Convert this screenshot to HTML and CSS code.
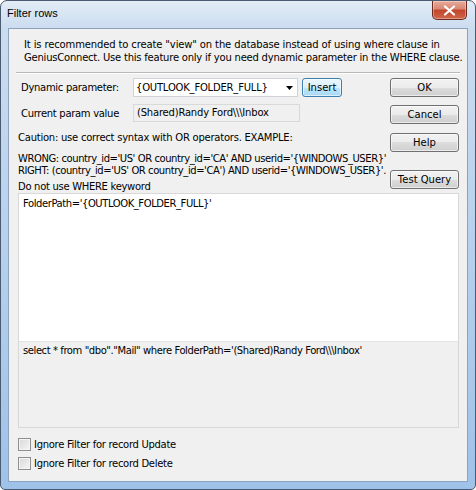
FILE: index.html
```html
<!DOCTYPE html>
<html lang="en">

<head>
    <meta charset="UTF-8">
    <meta name="viewport" content="width=device-width, initial-scale=1.0">
    <title>Filter rows</title>
    <link rel="stylesheet" href="styles.css">
</head>

<body>
    <div class="window">
        <div class="titlebar">
            <span class="title">Filter rows</span>
            <span class="close-btn">
                <svg width="13" height="11" viewBox="0 0 13 11">
                    <path d="M2 1.5 L11 9.5 M11 1.5 L2 9.5" stroke="#fff" stroke-width="2.2" stroke-linecap="round" />
                </svg>
            </span>
        </div>
        <div class="client">
            <p class="intro">
                <span class="intro-line1">It is recommended to create "view" on the database instead of using where clause in</span><br>
                <span class="intro-line2">GeniusConnect. Use this feature only if you need dynamic parameter in the WHERE clause.</span>
            </p>
            <div class="separator"></div>
            <div class="top">
                <div class="form">
                    <div class="row row-param">
                        <span class="label">Dynamic parameter:</span>
                        <div class="combo">
                            <span class="combo-text">{OUTLOOK_FOLDER_FULL}</span>
                            <svg class="combo-arrow" width="7" height="4" viewBox="0 0 7 4">
                                <path d="M0 0 H7 L3.5 4 Z" fill="#000" />
                            </svg>
                        </div>
                        <button class="btn btn-insert">Insert</button>
                    </div>
                    <div class="row row-value">
                        <span class="label">Current param value</span>
                        <div class="field">(Shared)Randy Ford\\\Inbox</div>
                    </div>
                    <p class="caution">Caution: use correct syntax with OR operators. EXAMPLE:</p>
                    <p class="example">WRONG: country_id='US' OR country_id='CA' AND userid='{WINDOWS_USER}'<br>RIGHT: (country_id='US' OR country_id='CA') AND userid='{WINDOWS_USER}'.</p>
                    <p class="hint">Do not use WHERE keyword</p>
                </div>
                <div class="buttons">
                    <button class="btn btn-ok">OK</button>
                    <button class="btn btn-cancel">Cancel</button>
                    <button class="btn btn-help">Help</button>
                    <button class="btn btn-test">Test Query</button>
                </div>
            </div>
            <div class="editor">
                <div class="edit">FolderPath='{OUTLOOK_FOLDER_FULL}'</div>
                <div class="result">select * from "dbo"."Mail" where FolderPath='(Shared)Randy Ford\\\Inbox'</div>
            </div>
            <div class="checks">
                <label class="check"><span class="box"></span>Ignore Filter for record Update</label>
                <label class="check"><span class="box"></span>Ignore Filter for record Delete</label>
            </div>
        </div>
    </div>
</body>

</html>
```

FILE: styles.css
```css
* {
    margin: 0;
    padding: 0;
    box-sizing: border-box;
}

body {
    width: 476px;
    height: 490px;
    font-family: "DejaVu Sans", Verdana, sans-serif;
    font-size: 10px;
    color: #000;
    background: #fff;
}

.window {
    width: 476px;
    height: 490px;
    display: flex;
    flex-direction: column;
    border: 1px solid #4a5a70;
    border-radius: 7px 7px 5px 5px;
    background: linear-gradient(to bottom, #e2ecf7 0, #cbdcef 28px, #b6d0ec 250px, #9fc2e8 100%);
    overflow: hidden;
}

.titlebar {
    height: 27px;
    display: flex;
    align-items: flex-start;
    padding-left: 6px;
    padding-right: 8px;
}

.title {
    font-family: "Liberation Sans", Arial, sans-serif;
    font-size: 11px;
    line-height: 24px;
    color: #000;
}

.close-btn {
    margin-left: auto;
    width: 35px;
    height: 19px;
    display: flex;
    align-items: center;
    justify-content: center;
    border: 1px solid #6e2a1c;
    border-top: none;
    border-radius: 0 0 5px 5px;
    background: linear-gradient(to bottom, #e9ab9b 0, #d88672 45%, #c2452b 50%, #d0654a 100%);
    box-shadow: inset 0 0 0 1px rgba(255, 255, 255, 0.35);
}

.client {
    flex: 1;
    margin: 0 7px 7px 7px;
    padding: 0 7px 0 7px;
    background: #f0f0f0;
    border: 1px solid #8da2bd;
    display: flex;
    flex-direction: column;
}

.intro {
    padding-top: 9px;
    margin-left: 8px;
    line-height: 13px;
    white-space: nowrap;
}

.intro-line1 {
    letter-spacing: -0.13px;
}

.intro-line2 {
    letter-spacing: -0.22px;
}

.separator {
    margin-top: 8px;
    height: 2px;
    border-top: 1px solid #b9b9b9;
    border-bottom: 1px solid #fff;
}

.top {
    display: flex;
}

.form {
    flex: 1;
    min-width: 0;
    margin-left: 2px;
}

.row {
    display: flex;
    align-items: center;
}

.row-param {
    margin-top: 4px;
    height: 19px;
}

.row-value {
    margin-top: 7px;
    height: 18px;
}

.label {
    width: 115px;
    flex-shrink: 0;
    padding-left: 3px;
    letter-spacing: -0.3px;
}

.combo {
    width: 165px;
    height: 19px;
    flex-shrink: 0;
    display: flex;
    align-items: center;
    background: #fff;
    border: 1px solid #cfd3d8;
    padding-left: 2px;
    padding-right: 3px;
}

.combo-text {
    flex: 1;
    letter-spacing: -0.2px;
}

.combo-arrow {
    margin-right: 1px;
}

.field {
    width: 167px;
    height: 18px;
    flex-shrink: 0;
    line-height: 16px;
    padding-left: 3px;
    letter-spacing: -0.2px;
    background: #f0f0f0;
    border: 1px solid #d9d9d9;
}

.caution {
    margin-top: 9px;
    line-height: 13px;
    white-space: nowrap;
    letter-spacing: -0.24px;
}

.example {
    margin-top: 9px;
    line-height: 12px;
    white-space: nowrap;
    letter-spacing: -0.43px;
}

.hint {
    margin-top: 3px;
    line-height: 13px;
    letter-spacing: -0.3px;
}

.btn {
    font-family: "DejaVu Sans", Verdana, sans-serif;
    font-size: 10px;
    color: #000;
    height: 19px;
    padding: 0;
    white-space: nowrap;
    border: 1px solid #707070;
    border-radius: 3px;
    background: linear-gradient(to bottom, #f2f2f2 0, #ebebeb 50%, #dddddd 50%, #cfcfcf 100%);
    box-shadow: inset 0 0 0 1px rgba(255, 255, 255, 0.6);
}

.btn-insert {
    width: 40px;
    flex-shrink: 0;
    margin-left: 4px;
    border-color: #3c7fb1;
    background: linear-gradient(to bottom, #eaf6fd 0, #d9f0fc 50%, #bee6fd 50%, #a7d9f5 100%);
}

.buttons {
    width: 69px;
    flex-shrink: 0;
    margin-right: 1px;
    display: flex;
    flex-direction: column;
}

.btn-ok {
    margin-top: 4px;
}

.btn-cancel {
    margin-top: 8px;
}

.btn-help {
    margin-top: 9px;
}

.btn-test {
    margin-top: 18px;
}

.editor {
    margin: 0 1px 0 2px;
    height: 235px;
    border: 1px solid #d8d8d8;
    display: flex;
    flex-direction: column;
    letter-spacing: -0.42px;
}

.edit {
    height: 147px;
    background: #fff;
    padding: 3px 4px;
    line-height: 13px;
}

.result {
    flex: 1;
    background: #f0f0f0;
    border-top: 1px solid #e2e2e2;
    padding: 2px 4px;
    line-height: 13px;
}

.checks {
    margin-top: 10px;
    margin-left: 2px;
    display: flex;
    flex-direction: column;
    gap: 6px;
}

.check {
    display: flex;
    align-items: center;
    height: 13px;
    letter-spacing: -0.3px;
}

.box {
    width: 13px;
    height: 13px;
    margin-right: 3px;
    border: 1px solid #8e8f8f;
    background: linear-gradient(135deg, #d8d8d8 0, #f6f6f6 100%);
    box-shadow: inset 0 0 0 1px #f4f4f4;
}
```
